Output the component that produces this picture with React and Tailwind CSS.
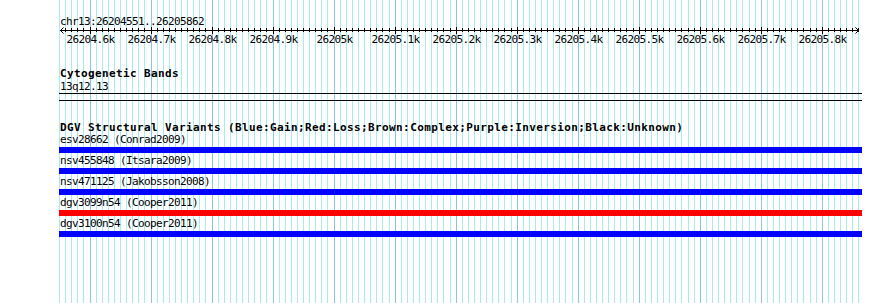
import React from 'react';

const START = 26204550;
const END = 26205860;
const PX = 0.6102;
const X0 = 59;
const xOf = (p) => Math.round(X0 + (p - START) * PX) + 0.5;

const mono = { fontFamily: '"DejaVu Sans Mono", "Liberation Mono", monospace' };

const variants = [
  { name: 'esv28662 (Conrad2009)', bar: 'bg-[#0000ff]' },
  { name: 'nsv455848 (Itsara2009)', bar: 'bg-[#0000ff]' },
  { name: 'nsv471125 (Jakobsson2008)', bar: 'bg-[#0000ff]' },
  { name: 'dgv3099n54 (Cooper2011)', bar: 'bg-[#ff0000]' },
  { name: 'dgv3100n54 (Cooper2011)', bar: 'bg-[#0000ff]' },
];

function Grid() {
  const lines = [];
  for (let p = START; p <= END; p += 10) {
    const major = p % 100 === 0;
    const x = xOf(p);
    lines.push(
      <line key={p} x1={x} x2={x} y1={0} y2={303} stroke={major ? '#86c6ee' : '#a8ecf0'} strokeWidth="1" />
    );
  }
  return (
    <svg className="absolute inset-0" width="890" height="303">
      {lines}
    </svg>
  );
}

function Ruler() {
  const ticks = [];
  const labels = [];
  for (let p = START + 10; p <= END; p += 10) {
    const major = p % 100 === 0;
    const x = xOf(p);
    ticks.push(<line key={p} x1={x} x2={x} y1={major ? -1 : 0} y2={major ? 6 : 4} stroke="#000" />);
    if (major) {
      const label = (p / 1000).toFixed(p % 1000 === 0 ? 0 : 1) + 'k';
      labels.push(
        <text key={'l' + p} x={x} y={15} textAnchor="middle" fontSize="11" letterSpacing="-0.62" fill="#000" style={mono}>
          {label}
        </text>
      );
    }
  }
  return (
    <svg className="relative block" width="890" height="18" overflow="visible">
      <line x1="60" x2="859" y1="2.5" y2="2.5" stroke="#000" />
      <polyline points="63.5,-0.5 60.5,2.5 63.5,5.5" fill="none" stroke="#000" />
      <polyline points="855.5,-0.5 858.5,2.5 855.5,5.5" fill="none" stroke="#000" />
      {ticks}
      {labels}
    </svg>
  );
}

export default function App() {
  return (
    <div className="relative w-[890px] h-[303px] bg-white overflow-hidden text-black">
      <Grid />
      <div className="relative">
        <div className="h-[15px]" />
        <div className="pl-[60px] h-[13px] leading-[13px] text-[11px] tracking-[-0.62px]" style={mono}>
          chr13:26204551..26205862
        </div>
        <Ruler />

        {/* Cytogenetic Bands */}
        <div className="mt-[21px] pl-[60px] h-[13px] leading-[13px] text-[11px] font-bold tracking-[0.38px]" style={mono}>
          Cytogenetic Bands
        </div>
        <div className="pl-[60px] h-[13px] leading-[13px] text-[11px] tracking-[-0.62px]" style={mono}>
          13q12.13
        </div>
        <div className="ml-[59px] w-[803px] h-px bg-black" />
        <div className="ml-[59px] w-[803px] h-px bg-black mt-[6px]" />

        {/* DGV Structural Variants */}
        <div className="mt-[21px] pl-[60px] h-[12px] leading-[12px] text-[11px] font-bold tracking-[0.38px] whitespace-nowrap" style={mono}>
          DGV Structural Variants (Blue:Gain;Red:Loss;Brown:Complex;Purple:Inversion;Black:Unknown)
        </div>
        <div className="flex flex-col gap-[2px]">
          {variants.map((v) => (
            <div key={v.name} className="flex flex-col gap-px">
              <div className="pl-[60px] h-[12px] leading-[12px] text-[11px] tracking-[-0.62px] whitespace-nowrap" style={mono}>
                {v.name}
              </div>
              <div className={`ml-[59px] w-[803px] h-[6px] ${v.bar}`} />
            </div>
          ))}
        </div>
      </div>
    </div>
  );
}
